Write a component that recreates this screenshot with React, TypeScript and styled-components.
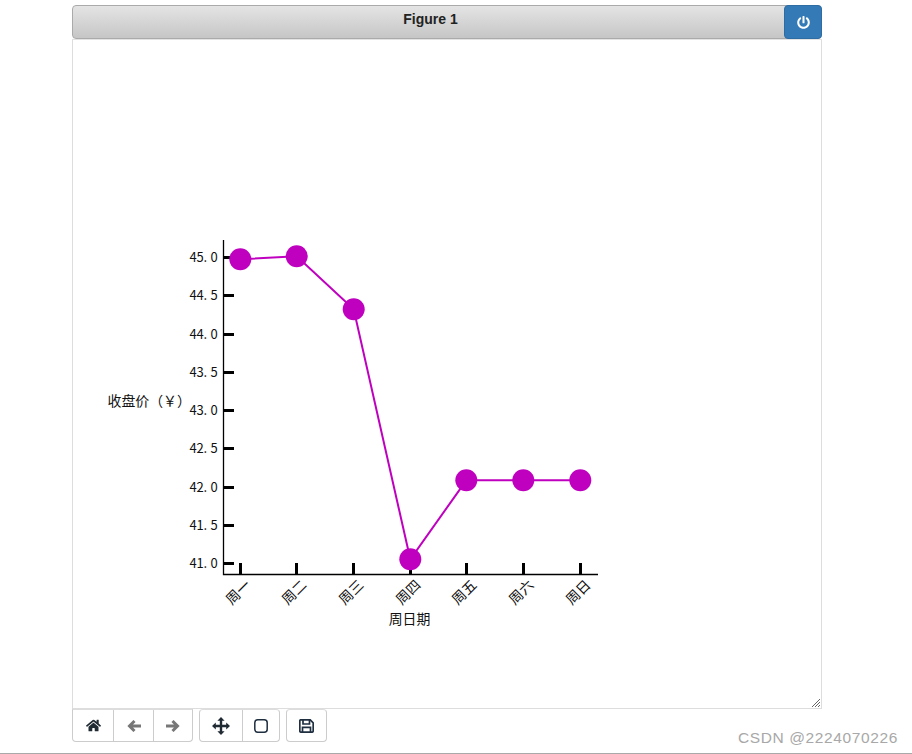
import React from 'react';
import styled, { createGlobalStyle } from 'styled-components';
import { FaHome, FaPowerOff } from 'react-icons/fa';

const GlobalStyle = createGlobalStyle`
  html, body {
    margin: 0;
    padding: 0;
    background: #fff;
  }
`;

const Page = styled.div`
  position: relative;
  box-sizing: border-box;
  width: 912px;
  height: 754px;
  padding: 5px 0 0 72px;
  overflow: hidden;
  border-bottom: 1px solid #a9a9a9;
  font-family: 'Liberation Sans', Arial, sans-serif;
`;

const Figure = styled.div`
  width: 750px;
`;

const TitleBar = styled.div`
  position: relative;
  box-sizing: border-box;
  display: flex;
  align-items: center;
  justify-content: center;
  height: 34px;
  padding: 0 33px 6px 0;
  border: 1px solid #aaa;
  border-radius: 4px;
  background: linear-gradient(to bottom, #e4e4e4, #c6c6c6);
  color: #222;
  font-size: 14px;
  font-weight: bold;
`;

const CloseButton = styled.button`
  position: absolute;
  top: -1px;
  right: -1px;
  display: flex;
  align-items: center;
  justify-content: center;
  width: 38px;
  height: 34px;
  padding: 0;
  border: 1px solid #2e6da4;
  border-radius: 4px;
  background: #337ab7;
  color: #fff;
  font-size: 13px;
`;

const Canvas = styled.div`
  position: relative;
  box-sizing: border-box;
  height: 670px;
  border: 1px solid #ddd;
  border-top-color: #e3e3e3;
  background: #fff;

  svg {
    display: block;
  }
`;

const ResizeHandle = styled.svg`
  position: absolute;
  right: 0;
  bottom: 0;
`;

const Toolbar = styled.div`
  display: flex;
  gap: 6px;
`;

const ButtonGroup = styled.div`
  display: flex;
  box-sizing: border-box;
  height: 33px;
  border: 1px solid #ccc;
  border-top-color: #ddd;
  border-radius: 0 0 4px 4px;
  background: #fff;

  &:not(:first-child) {
    border-radius: 4px;
  }
`;

const ToolButton = styled.button<{ $width: number }>`
  display: flex;
  align-items: center;
  justify-content: center;
  box-sizing: border-box;
  width: ${(p) => p.$width}px;
  padding: 0;
  border: 0;
  background: transparent;
  color: #1f2a33;
  font-size: 15px;

  & + & {
    border-left: 1px solid #ccc;
  }
`;

const Watermark = styled.div`
  position: absolute;
  right: 14px;
  bottom: 6px;
  color: #a8a8a8;
  font-size: 15.5px;
  letter-spacing: 0.62px;
`;

const chartFont = '"Noto Sans CJK SC", "Liberation Sans", sans-serif';
const purple = '#bf00bf';
const charWidth = 6.95;

const yTicks = [
  { label: '45.0', y: 257.5 },
  { label: '44.5', y: 295.5 },
  { label: '44.0', y: 334.5 },
  { label: '43.5', y: 372.5 },
  { label: '43.0', y: 410.5 },
  { label: '42.5', y: 448.5 },
  { label: '42.0', y: 487.5 },
  { label: '41.5', y: 525.5 },
  { label: '41.0', y: 563.5 },
];

const xTicks = [
  { label: '周一', x: 240.5 },
  { label: '周二', x: 296.5 },
  { label: '周三', x: 353.5 },
  { label: '周四', x: 410.5 },
  { label: '周五', x: 466.5 },
  { label: '周六', x: 523.5 },
  { label: '周日', x: 580.5 },
];

const points = [
  [240.3, 259.3],
  [296.7, 256.3],
  [353.7, 309.3],
  [410.3, 559.3],
  [466.3, 480.3],
  [523.3, 480.3],
  [580.3, 480.3],
];

function Chart() {
  return (
    <svg width={748} height={668} viewBox="73 40 748 668">
      <g stroke="#000" fill="none">
        <path d="M223.5 240V574.5H598" strokeWidth={1.3} />
        {yTicks.map((t) => (
          <path key={t.label} d={`M223 ${t.y}h11`} strokeWidth={3} />
        ))}
        {xTicks.map((t) => (
          <path key={t.label} d={`M${t.x} 574v-11`} strokeWidth={3} />
        ))}
      </g>
      <polyline
        points={points.map((p) => p.join(',')).join(' ')}
        fill="none"
        stroke={purple}
        strokeWidth={2}
      />
      {points.map(([x, y]) => (
        <circle key={x} cx={x} cy={y} r={11} fill={purple} />
      ))}
      <g fontFamily={chartFont} fontSize={13.9} fill="#111">
        {yTicks.map((t) => (
          <text
            key={t.label}
            fontSize={13}
            x={[0, 1, 2, 3].map((i) => 189.6 + i * charWidth).join(' ')}
            y={t.y + 4.5}
          >
            {t.label}
          </text>
        ))}
        {xTicks.map((t) => (
          <text
            key={t.label}
            x={t.x - 1.5}
            y={593}
            textAnchor="middle"
            dominantBaseline="middle"
            transform={`rotate(-45 ${t.x - 1.5} 593)`}
          >
            {t.label}
          </text>
        ))}
        <text x={107.5} y={406}>收盘价（￥）</text>
        <text x={409.5} y={624} textAnchor="middle">周日期</text>
      </g>
    </svg>
  );
}

function ArrowIcon({ flip }: { flip?: boolean }) {
  return (
    <svg width={14} height={12} viewBox="0 0 14 12" style={flip ? { transform: 'scaleX(-1)' } : undefined}>
      <path d="M7.5 1L2.5 6L7.5 11M3 6H14" fill="none" stroke="#777" strokeWidth={3} />
    </svg>
  );
}

function MoveIcon() {
  return (
    <svg width={18} height={18} viewBox="0 0 18 18" fill="#1f2a33">
      <path d="M9 2V16M2 9H16" stroke="#1f2a33" strokeWidth={2.4} />
      <path d="M9 0L12.6 3.8H5.4ZM9 18L12.6 14.2H5.4ZM0 9L3.8 5.4V12.6ZM18 9L14.2 5.4V12.6Z" />
    </svg>
  );
}

function SquareIcon() {
  return (
    <svg width={14} height={14} viewBox="0 0 14 14">
      <rect x={0.8} y={0.8} width={12.4} height={12.4} rx={3} fill="none" stroke="#1f2f40" strokeWidth={1.5} />
    </svg>
  );
}

function SaveIcon() {
  return (
    <svg width={15} height={14} viewBox="0 0 15 14" fill="none" stroke="#1f2f40" strokeWidth={1.7}>
      <path d="M1.8 0.8H11.2L14.2 3.8V11.8Q14.2 13.2 12.8 13.2H2.2Q0.8 13.2 0.8 11.8V1.8Q0.8 0.8 1.8 0.8Z" />
      <path d="M4 1V5H10.5V1" />
      <path d="M3.5 13V8.3H11.5V13" />
    </svg>
  );
}

export default function App() {
  return (
    <Page>
      <GlobalStyle />
      <Figure>
        <TitleBar>
          Figure 1
          <CloseButton aria-label="Stop interaction">
            <FaPowerOff />
          </CloseButton>
        </TitleBar>
        <Canvas>
          <Chart />
          <ResizeHandle width={10} height={10} viewBox="0 0 10 10">
            <path d="M1 9L9 1M4 9L9 4M7 9L9 7" stroke="#666" strokeWidth={1} />
          </ResizeHandle>
        </Canvas>
        <Toolbar>
          <ButtonGroup>
            <ToolButton $width={40}><FaHome /></ToolButton>
            <ToolButton $width={40}><ArrowIcon /></ToolButton>
            <ToolButton $width={39}><ArrowIcon flip /></ToolButton>
          </ButtonGroup>
          <ButtonGroup>
            <ToolButton $width={42}><MoveIcon /></ToolButton>
            <ToolButton $width={37}><SquareIcon /></ToolButton>
          </ButtonGroup>
          <ButtonGroup>
            <ToolButton $width={39}><SaveIcon /></ToolButton>
          </ButtonGroup>
        </Toolbar>
      </Figure>
      <Watermark>CSDN @2224070226</Watermark>
    </Page>
  );
}
